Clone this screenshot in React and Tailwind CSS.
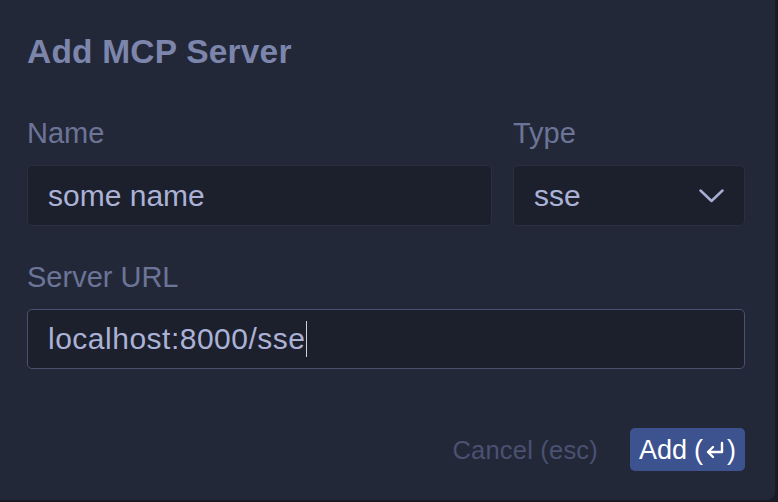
import React from 'react'

const FONT = { fontFamily: '"Liberation Sans", Arial, sans-serif' }

export default function App() {
  return (
    <div className="w-[778px] h-[502px] bg-[#191b25] overflow-hidden" style={FONT}>
      <div className="w-[775px] h-[500px] bg-[#232838] rounded-br-[8px] pl-[27px] pr-[30px] pt-[32px] flex flex-col">
        <h1 className="text-[33.5px] leading-[40px] font-bold text-[#7c85ab] tracking-[0.2px]">Add MCP Server</h1>

        <div className="mt-[43px] grid grid-cols-[465px_1fr] gap-x-[21px]">
          <Field label="Name">
            <div className="h-[61px] rounded-[5px] border border-[#2a2f41] bg-[#1c1f2c] flex items-center pl-[20px]">
              <span className="text-[30px] leading-[36px] text-[#abb2d6]">some name</span>
            </div>
          </Field>
          <Field label="Type">
            <div className="h-[61px] rounded-[5px] border border-[#2a2f41] bg-[#1c1f2c] flex items-center justify-between pl-[20px] pr-[20px]">
              <span className="text-[30px] leading-[36px] text-[#abb2d6]">sse</span>
              <svg width="25" height="14" viewBox="0 0 25 14" fill="none">
                <path d="M1.5 1.5 L12.5 12 L23.5 1.5" stroke="#a7aed2" strokeWidth="2.5" strokeLinecap="round" strokeLinejoin="round" />
              </svg>
            </div>
          </Field>
        </div>

        <div className="mt-[33px]">
          <Field label="Server URL">
            <div className="h-[60px] rounded-[5px] border-[1.5px] border-[#4a5270] bg-[#1c1f2c] flex items-center pl-[20px]">
              <span className="text-[30px] leading-[36px] tracking-[0.5px] text-[#abb2d6]">localhost:8000/sse</span>
              <span className="w-[1.5px] h-[36px] bg-[#c9cee6]" />
            </div>
          </Field>
        </div>

        <div className="mt-[59px] flex items-center justify-end gap-[32px]">
          <span className="text-[25.5px] leading-[32px] text-[#4a5171] tracking-[0.2px]">Cancel (esc)</span>
          <button className="h-[43px] w-[115px] rounded-[5px] bg-[#3c5390] text-white text-[27px] leading-[32px] flex items-center justify-center gap-[7px]">
            <span>Add</span>
            <span className="flex items-center">
              (
              <svg width="22" height="20" viewBox="0 0 22 20" fill="none" className="mx-[1px]">
                <path d="M18 3 V12 H4 M9 7 L4 12 L9 17" stroke="white" strokeWidth="2.4" strokeLinecap="round" strokeLinejoin="round" />
              </svg>
              )
            </span>
          </button>
        </div>
      </div>
    </div>
  )
}

function Field({ label, children }) {
  return (
    <label className="block">
      <span className="block text-[29px] leading-[36px] text-[#6c7497] mb-[14px]">{label}</span>
      {children}
    </label>
  )
}
